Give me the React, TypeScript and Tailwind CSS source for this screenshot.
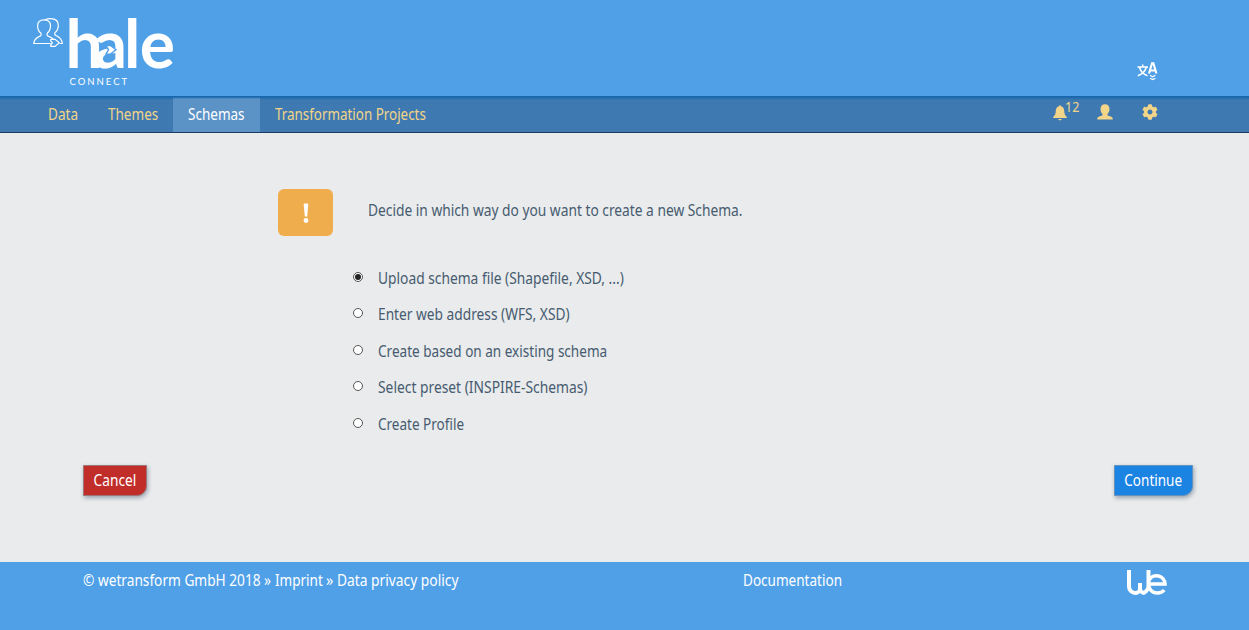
import { useState } from "react";
import { FaCog } from "react-icons/fa";

const navItems = [
  { label: "Data", width: "w-[60px]", scale: "scale-x-[0.85]" },
  { label: "Themes", width: "w-[80px]", scale: "scale-x-[0.845]" },
  { label: "Schemas", width: "w-[87px]", scale: "scale-x-[0.845]" },
  { label: "Transformation Projects", width: "w-[181px]", scale: "scale-x-[0.837]" },
];

const options = [
  { label: "Upload schema file (Shapefile, XSD, ...)", scale: "scale-x-[0.861]" },
  { label: "Enter web address (WFS, XSD)", scale: "scale-x-[0.858]" },
  { label: "Create based on an existing schema", scale: "scale-x-[0.847]" },
  { label: "Select preset (INSPIRE-Schemas)", scale: "scale-x-[0.864]" },
  { label: "Create Profile", scale: "scale-x-[0.845]" },
];

function HaleLogo() {
  return (
    <svg width="150" height="76" viewBox="0 0 150 76" fill="none" aria-label="hale connect">
      <g stroke="#fff" strokeWidth="1.2" strokeLinejoin="round">
        <path d="M17.500 25.500H.7c.3-4 2.500-5.800 6.300-7.400 1.400-.7 1.500-1.700.8-3C5.500 13.500 4.600 11 4.600 7.800 4.600 4 7 1.900 11 1.900s6.500 2.100 6.500 5.900c0 3.200-.9 5.700-3.100 7.300-.7 1.300-.6 2.300.8 3 2.300 1 4.200 2 5.200 3.300" />
        <path d="M12 1.900C13.500 1 15.300.7 17.500.7c4.800 0 7.800 2.300 7.800 6.600 0 3.200-1 5.600-3.200 7.200-.7 1.300-.5 2.300.9 3 3.800 1.700 6 3.800 6.300 8h-2.500" />
        <path d="M17.800 21.400h4.300l4.200 3.400-4.200 3.600h-4.300v-1.900l1.700-1.700-1.700-1.700z" />
      </g>
      <text x="32.500 60.500 91 106.800" y="50" fill="#fff" fontFamily="Lato" fontSize="66" fontWeight="700">hale</text>
      <path d="M73 27.500h4.500l5.500 4.300-5.500 4.300H73l2.500-4.300z" fill="#fff" stroke="#50a0e8" strokeWidth="1.400" />
      <text x="36.500" y="67" fill="#fff" fontFamily="Lato" fontSize="9.500" letterSpacing="2">CONNECT</text>
    </svg>
  );
}

function LanguageIcon() {
  return (
    <svg width="22" height="20" viewBox="0 0 22 20" fill="none" stroke="#fff" aria-label="Language">
      <path d="M.5 5h10.500M5.700 2.500V5M2.500 5.500c1.300 4.200 4 6.800 8 8.200M9.300 5.500C7.800 9.700 5 12.300.8 13.700" strokeWidth="1.600" />
      <path d="M12 11.500 15 1.200h1.400l3 10.300M13.200 8.500h5" strokeWidth="2.100" />
      <path d="m13 13.300 2.700 1.400 2.700-1.400M13 16.200l2.700 1.400 2.700-1.400" strokeWidth="1.200" />
    </svg>
  );
}

function BellIcon() {
  return (
    <svg width="14" height="16" viewBox="0 0 14 16" fill="currentColor">
      <path d="M6 1.200a1 1 0 0 1 2 0C10.600 1.900 11.200 4 11.300 6.500c.1 2.500.8 4 2.500 5.500v1.100H.2V12C1.900 10.500 2.600 9 2.700 6.500 2.800 4 3.400 1.900 6 1.200zM5.200 14h3.600c-.3.900-.9 1.300-1.800 1.300S5.500 14.900 5.200 14z" />
    </svg>
  );
}

function UserIcon() {
  return (
    <svg width="16" height="16" viewBox="0 0 16 16" fill="currentColor">
      <path d="M8 .3c2.800 0 4.500 1.800 4.500 4.600 0 2-.7 3.900-2 5.100-.3.700 0 1.300.7 1.700 2.600.8 4.300 1.300 4.500 2.600v1.200H.3v-1.200c.2-1.300 1.900-1.800 4.500-2.600.7-.4 1-1 .7-1.700-1.300-1.200-2-3.100-2-5.100C3.500 2.100 5.200.3 8 .3z" />
    </svg>
  );
}

function WeLogo() {
  return (
    <svg width="42" height="28" viewBox="0 0 42 28" fill="none" stroke="#fff" strokeWidth="4" aria-label="wetransform">
      <path d="M3 1v16.500a6.500 6.500 0 0 0 6.500 6.500 4.500 4.500 0 0 0 4.500-4.500V14v5.500A4.500 4.500 0 0 0 18.500 24" />
      <path d="M22.500 1v14a9 9 0 0 1-5 9" />
      <path d="M22.500 15H39a8.600 8.600 0 0 0-16-4M22.700 15a8.500 8.500 0 0 0 8.500 9c3 0 5.500-1 7-3" strokeWidth="3.500" />
    </svg>
  );
}

export default function App() {
  const [selected, setSelected] = useState(0);

  return (
    <div className="flex h-[630px] w-full flex-col overflow-hidden bg-[#e9ebec] font-['Noto_Sans','Open_Sans',sans-serif] text-base leading-5 whitespace-nowrap text-[#475b70]">
      <header className="flex h-24 shrink-0 items-start justify-between bg-[#50a0e8] pt-[18px] pr-[90px] pl-[33px]">
        <HaleLogo />
        <button className="mt-11"><LanguageIcon /></button>
      </header>

      <nav className="flex h-[37px] shrink-0 justify-between border-b border-[#1d3c60] bg-[linear-gradient(#1967ac_1px,#3f79b1_4px)] pr-[91px] pl-[33px] text-[#f2d588]">
        <div className="flex">
          {navItems.map((item) => (
            <a
              key={item.label}
              className={`pt-2 pl-[15px] ${item.width} ${item.label === "Schemas" ? "bg-[linear-gradient(#1967ac_1px,#5c93c7_3px)] text-white" : ""}`}
            >
              <span className={`block w-max origin-left ${item.scale}`}>{item.label}</span>
            </a>
          ))}
        </div>
        <div className="flex items-start">
          <button className="mt-[9px]"><BellIcon /></button>
          <span className="mt-px -ml-1 w-[34px] pl-0.5"><span className="block w-max origin-left scale-x-[0.9] text-[14px]">12</span></span>
          <button className="mt-2"><UserIcon /></button>
          <button className="mt-2 ml-[29px]"><FaCog size={16} /></button>
        </div>
      </nav>

      <main className="flex flex-1 flex-col">
        <div className="mt-14 ml-[278px] flex h-[47px] items-center">
          <div className="flex h-[47px] w-[55px] items-center justify-center rounded-md bg-[#f0ad4e]">
            <svg width="8" height="20" viewBox="0 0 8 20" fill="#fff">
              <path d="M1.700 1.500Q1.700.5 2.700.5h2.600q1 0 1 1L5.200 13.500H2.800z" />
              <circle cx="4" cy="17.500" r="2.400" />
            </svg>
          </div>
          <p className="mb-[5px] ml-[35px] w-max origin-left scale-x-[0.86]">Decide in which way do you want to create a new Schema.</p>
        </div>

        <div className="mt-[31.7px] ml-[353px] flex flex-col gap-[16.5px]">
          {options.map((option, index) => (
            <label key={option.label} className="flex h-5 items-start">
              <input
                type="radio"
                name="source"
                checked={selected === index}
                onChange={() => setSelected(index)}
                className="peer sr-only"
              />
              <span className="mt-1 flex size-[10px] items-center justify-center rounded-full border border-[#555] bg-white after:size-1.5 after:rounded-full peer-checked:after:bg-[#222]" />
              <span className={`ml-[14.5px] w-max origin-left ${option.scale}`}>{option.label}</span>
            </label>
          ))}
        </div>

        <div className="mt-[31.3px] flex justify-between pr-14 pl-[83px] text-white">
          <button className="flex h-[31px] w-16 items-center justify-center rounded-br-[10px] border border-[#9c7678] bg-[#c12e2a] pb-px shadow-[1px_2px_4px_#98a3af]">
            <span className="scale-x-[0.855]">Cancel</span>
          </button>
          <button className="flex h-[31px] w-[79px] items-center justify-center rounded-br-[10px] border border-[#6393bd] bg-[#1b83e2] pb-px shadow-[1px_2px_4px_#98a3af]">
            <span className="scale-x-[0.845]">Continue</span>
          </button>
        </div>
      </main>

      <footer className="flex h-[68px] shrink-0 items-start bg-[#50a0e8] pt-2 pl-[83px] text-white">
        <div className="flex w-[660px]">
          <span className="w-[192px]"><span className="block w-max origin-left scale-x-[0.855]">© wetransform GmbH 2018 »</span></span>
          <a className="w-[51px]"><span className="block w-max origin-left scale-x-[0.845]">Imprint</span></a>
          <span className="w-[11px]"><span className="block w-max origin-left scale-x-[0.9]">»</span></span>
          <a className="w-[121px]"><span className="block w-max origin-left scale-x-[0.862]">Data privacy policy</span></a>
        </div>
        <a className="w-[383px]"><span className="block w-max origin-left scale-x-[0.846]">Documentation</span></a>
        <span className="-mt-px"><WeLogo /></span>
      </footer>
    </div>
  );
}
